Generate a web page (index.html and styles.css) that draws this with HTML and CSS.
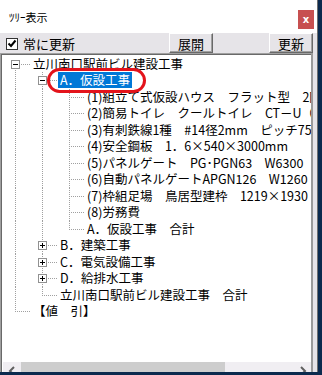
FILE: index.html
```html
<!DOCTYPE html>
<html>
<head>
    <meta charset="utf-8">
    <link rel="stylesheet" href="styles.css">
</head>
<body>
    <div class="window">
        <div class="titlebar">
            <div class="title">ﾂﾘｰ表示</div>
            <div class="close">x</div>
        </div>
        <div class="toolbar">
            <label class="check">
                <span class="checkbox">
                    <svg width="10" height="10" viewBox="0 0 10 10"><polyline points="1.5,4.5 4,7 8.5,1.5" fill="none" stroke="#000" stroke-width="2"/></svg>
                </span>
                常に更新
            </label>
            <div class="btn">展開</div>
            <div class="btn btn-right">更新</div>
        </div>
        <div class="tree">
            <div class="rows">
                <div class="row"><span class="c first"><i class="box"></i></span><span class="label">立川南口駅前ビル建設工事</span></div>
                <div class="row"><span class="g v"></span><span class="c mid"><i class="box"></i></span><span class="label selected">A．仮設工事</span></div>
                <div class="row"><span class="g v"></span><span class="g v"></span><span class="c mid"></span><span class="label">(1)組立て式仮設ハウス　フラット型　2階建</span></div>
                <div class="row"><span class="g v"></span><span class="g v"></span><span class="c mid"></span><span class="label">(2)簡易トイレ　クールトイレ　CT－U（A仕様）</span></div>
                <div class="row"><span class="g v"></span><span class="g v"></span><span class="c mid"></span><span class="label">(3)有刺鉄線1種　#14径2mm　ピッチ75</span></div>
                <div class="row"><span class="g v"></span><span class="g v"></span><span class="c mid"></span><span class="label">(4)安全鋼板　1．6×540×3000mm</span></div>
                <div class="row"><span class="g v"></span><span class="g v"></span><span class="c mid"></span><span class="label">(5)パネルゲート　PG･PGN63　W6300</span></div>
                <div class="row"><span class="g v"></span><span class="g v"></span><span class="c mid"></span><span class="label">(6)自動パネルゲートAPGN126　W1260</span></div>
                <div class="row"><span class="g v"></span><span class="g v"></span><span class="c mid"></span><span class="label">(7)枠組足場　鳥居型建枠　1219×1930</span></div>
                <div class="row"><span class="g v"></span><span class="g v"></span><span class="c mid"></span><span class="label">(8)労務費</span></div>
                <div class="row"><span class="g v"></span><span class="g v"></span><span class="c last"></span><span class="label">A．仮設工事　合計</span></div>
                <div class="row"><span class="g v"></span><span class="c mid"><i class="box plus"></i></span><span class="label">B．建築工事</span></div>
                <div class="row"><span class="g v"></span><span class="c mid"><i class="box plus"></i></span><span class="label">C．電気設備工事</span></div>
                <div class="row"><span class="g v"></span><span class="c mid"><i class="box plus"></i></span><span class="label">D．給排水工事</span></div>
                <div class="row"><span class="g v"></span><span class="c last"></span><span class="label">立川南口駅前ビル建設工事　合計</span></div>
                <div class="row"><span class="c last"></span><span class="label">【値　引】</span></div>
            </div>
            <div class="hscroll">
                <div class="arrow">
                    <svg width="8" height="10" viewBox="0 0 8 10"><polyline points="6,1 2,5 6,9" fill="none" stroke="#606060" stroke-width="2"/></svg>
                </div>
                <div class="thumb"></div>
                <div class="arrow arrow-right">
                    <svg width="8" height="10" viewBox="0 0 8 10"><polyline points="2,1 6,5 2,9" fill="none" stroke="#606060" stroke-width="2"/></svg>
                </div>
            </div>
        </div>
    </div>
</body>
</html>
```

FILE: styles.css
```css
body {
    margin: 0;
    background-color: #0b2a4e;
    font-family: "Noto Sans CJK JP", sans-serif;
    color: #000;
}

.window {
    width: 317px;
    height: 372px;
    overflow: hidden;
    background-color: #e6e4e8;
    border-right: 1px solid #6f6f6f;
    display: flex;
    flex-direction: column;
}

.titlebar {
    height: 33px;
    flex: none;
    background-color: #fff;
    display: flex;
    padding-left: 9px;
}

.title {
    font-size: 11px;
    line-height: 34px;
}

.close {
    margin-left: auto;
    margin-top: 10px;
    margin-right: 3px;
    width: 16px;
    height: 19px;
    background-color: #c75050;
    color: #fff;
    font: bold 10px "DejaVu Sans", sans-serif;
    display: flex;
    align-items: center;
    justify-content: center;
}

.toolbar {
    height: 20px;
    flex: none;
    display: flex;
    padding: 0 4px 0 6px;
}

.check {
    flex: 1;
    display: flex;
    align-items: center;
    gap: 5px;
    font-size: 13px;
}

.checkbox {
    width: 12px;
    height: 12px;
    box-sizing: border-box;
    border: 1px solid #333;
    background-color: #fff;
    display: flex;
    align-items: center;
    justify-content: center;
    margin-top: 2px;
}

.btn {
    width: 44px;
    box-sizing: border-box;
    font-size: 13px;
    background-color: #e6e4e8;
    border: 1px solid;
    border-color: #fff #696969 #696969 #fff;
    box-shadow: inset -1px -1px #a0a0a0;
    display: flex;
    align-items: center;
    justify-content: center;
}

.btn-right {
    margin-left: 56px;
}

.tree {
    width: 313px;
    height: 328px;
    flex: none;
    box-sizing: border-box;
    background-color: #fff;
    border-style: solid;
    border-width: 1px 2px 1px 1px;
    border-color: #a0a0a0 #9a9a9a #fff #a0a0a0;
    box-shadow: inset 1px 1px #696969;
    padding: 2px 0 0 2px;
    display: flex;
    flex-direction: column;
}

.rows {
    height: 306px;
    flex: none;
    overflow: hidden;
}

.row {
    display: flex;
    height: 16px;
    white-space: nowrap;
}

.row:nth-child(even) {
    height: 17px;
}

.g,
.c {
    flex: none;
    width: 27px;
    display: flex;
    align-items: flex-start;
    background-repeat: no-repeat;
}

.g.v {
    background-image: repeating-linear-gradient(to bottom, #a0a0a0 0 1px, transparent 1px 2px);
    background-size: 1px 100%;
    background-position: 12px 0;
}

.c {
    background-image:
        repeating-linear-gradient(to bottom, #a0a0a0 0 1px, transparent 1px 2px),
        repeating-linear-gradient(to right, #a0a0a0 0 1px, transparent 1px 2px);
    background-size: 1px 100%, 15px 1px;
    background-position: 12px 0, 12px 8px;
}

.c.first {
    background-position: 12px 8px, 12px 8px;
}

.c.last {
    background-size: 1px 9px, 15px 1px;
}

.box {
    width: 9px;
    height: 9px;
    box-sizing: border-box;
    margin: 4px 0 0 8px;
    border: 1px solid #919191;
    background: linear-gradient(#000, #000) center / 5px 1px no-repeat, #fff;
}

.box.plus {
    background:
        linear-gradient(#000, #000) center / 5px 1px no-repeat,
        linear-gradient(#000, #000) center / 1px 5px no-repeat,
        #fff;
}

.label {
    margin-left: 1px;
    padding: 0 2px;
    font-size: 12.5px;
    line-height: 16px;
    height: 16px;
}

.selected {
    position: relative;
    background-color: #0078d7;
    color: #fff;
}

/* red marker drawn on top of the selected node */
.selected::after {
    content: "";
    position: absolute;
    left: -11px;
    right: -14px;
    top: -4px;
    bottom: -5px;
    border: 3px solid #e3131b;
    border-radius: 14px;
}

.hscroll {
    height: 17px;
    flex: none;
    display: flex;
    background-color: #f0eef2;
}

.arrow {
    width: 17px;
    flex: none;
    display: flex;
    align-items: center;
    justify-content: center;
}

.arrow-right {
    margin-left: auto;
}

.thumb {
    width: 204px;
    margin-left: 1px;
    background-color: #cdcdcd;
}
```
